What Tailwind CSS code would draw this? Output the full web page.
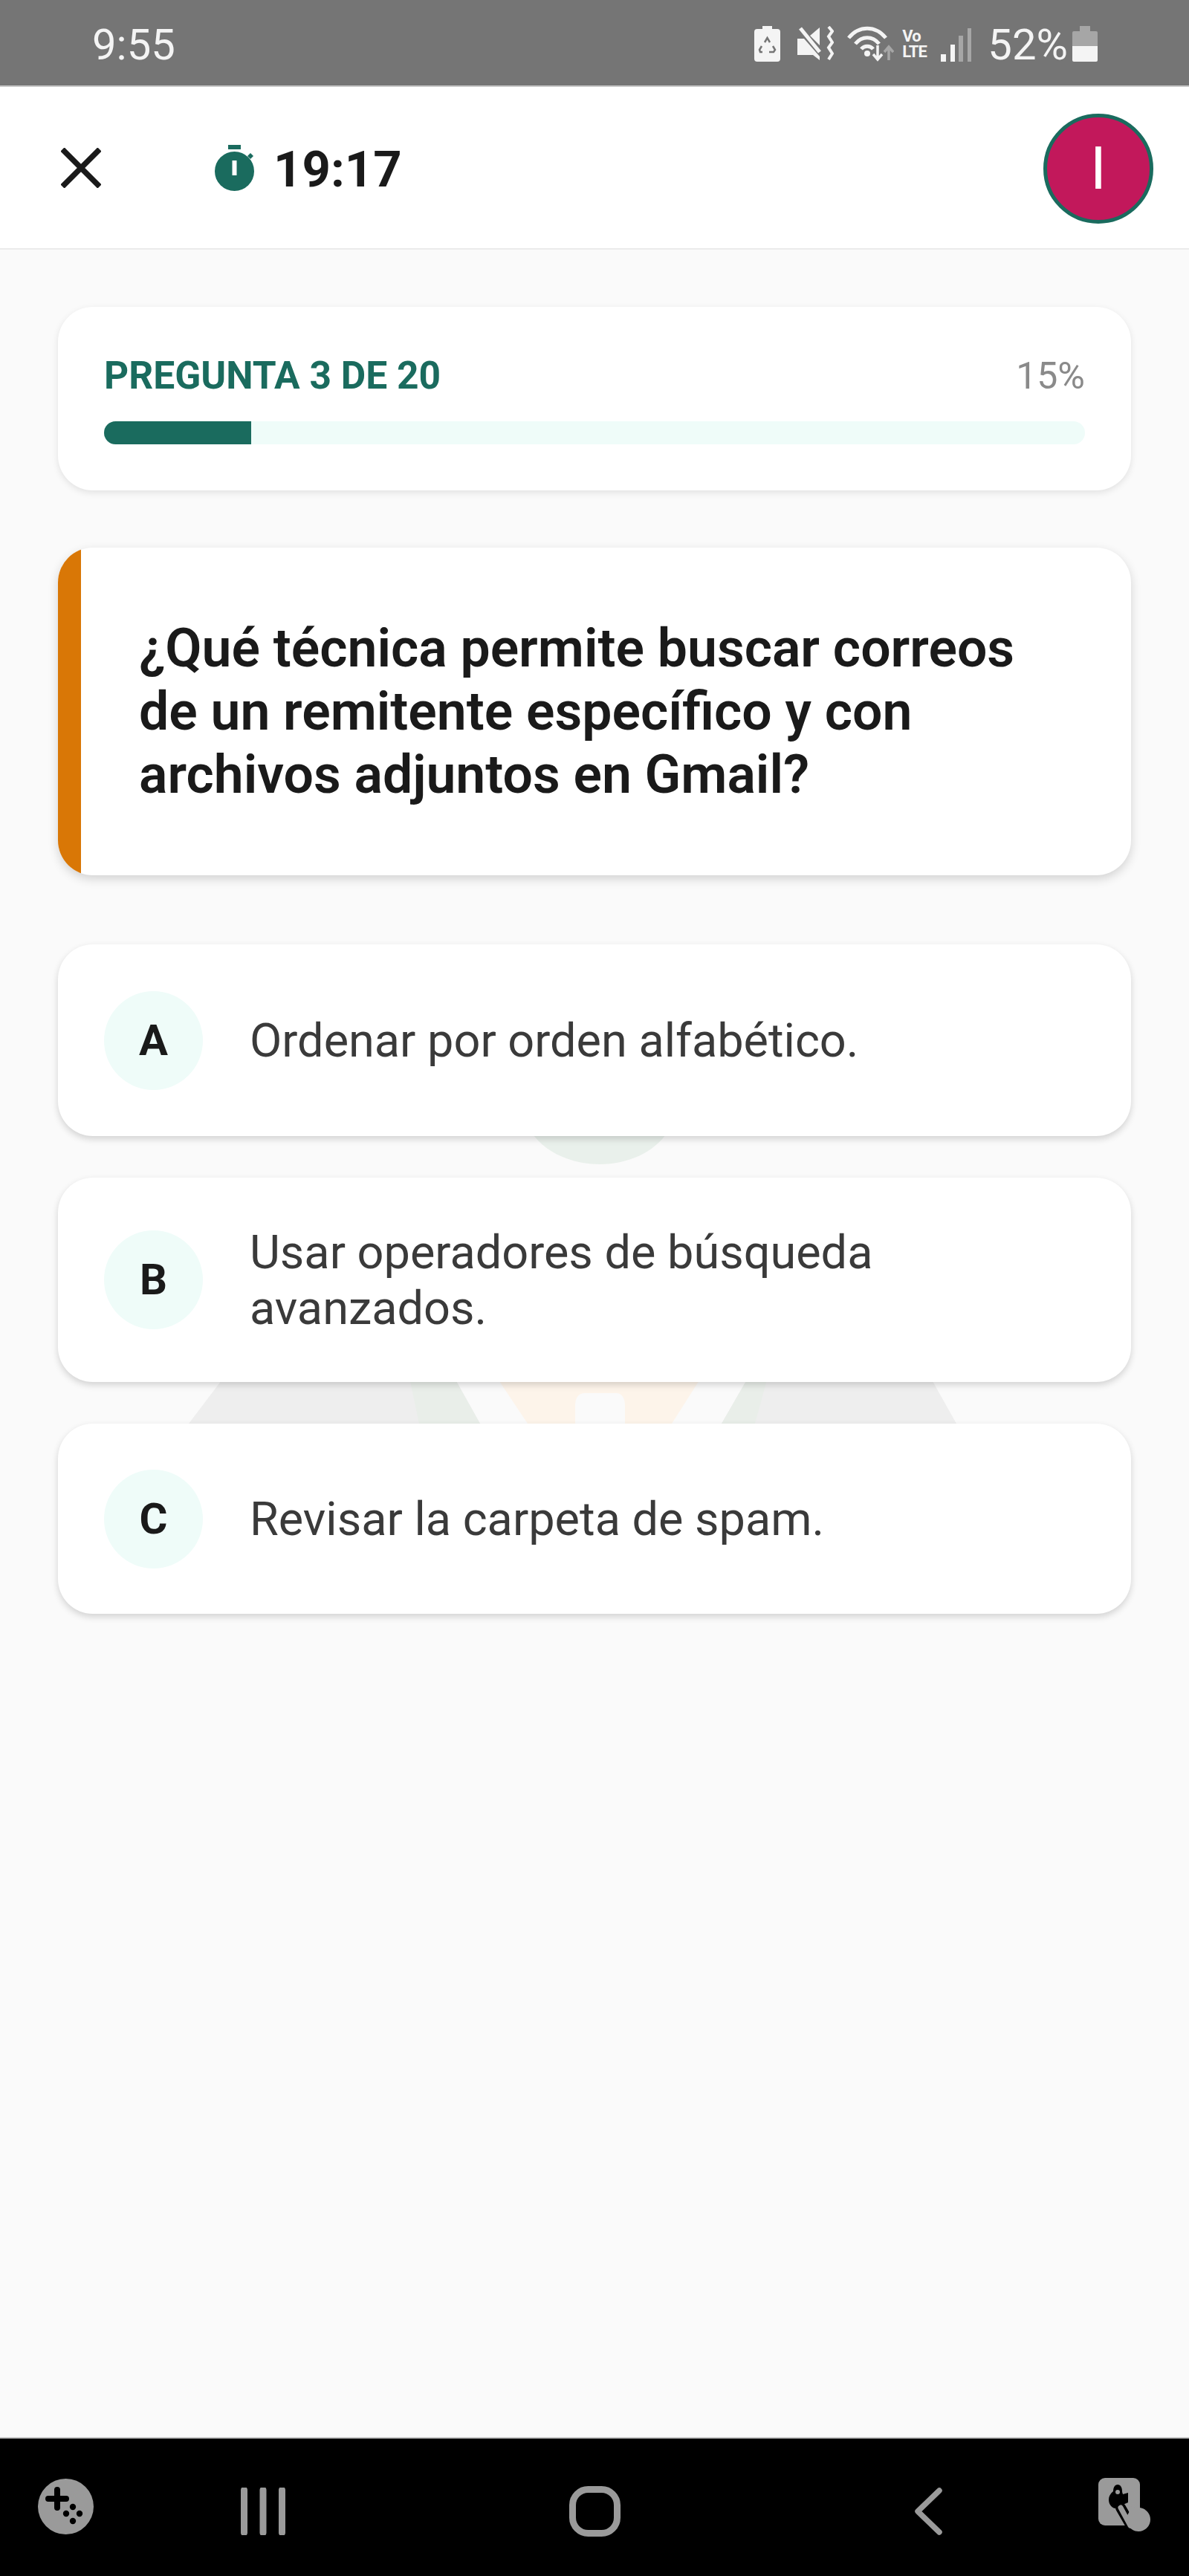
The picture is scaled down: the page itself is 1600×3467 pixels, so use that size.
<!DOCTYPE html>
<html lang="es">
<head>
    <meta charset="UTF-8">
    <meta name="viewport" content="width=device-width, initial-scale=1.0">
    <title>Pregunta 3 de 20</title>
    <script src="https://cdn.jsdelivr.net/npm/@tailwindcss/browser@4"></script>
</head>
<body class="font-[Roboto,sans-serif] bg-black">
    <div class="w-[1600px] h-[3467px] flex flex-col overflow-hidden">

        <!-- Status bar -->
        <div class="h-[117px] shrink-0 bg-[#757575] border-b-2 border-[#c8c8c8] flex items-start relative">
            <span class="ml-[124px] mt-[26px] text-[58px] leading-[68px] text-[#f4f4f4]">9:55</span>
            <div class="ml-auto mr-[123px] mt-[35px] flex items-start">
                <!-- battery saver -->
                <svg class="w-[35px] h-[48px]" viewBox="0 0 35 48">
                    <path d="M11 0h13v4h7a4 4 0 0 1 4 4v36a4 4 0 0 1-4 4H4a4 4 0 0 1-4-4V8a4 4 0 0 1 4-4h7z" fill="#f4f4f4"/>
                    <path d="M14 22l3.500-6 3.500 6M25 27l3 5-2 3h-6M11 35H8l-1-3 3-5" fill="none" stroke="#757575" stroke-width="2.500"/>
                </svg>
                <!-- mute + vibrate -->
                <svg class="ml-[23px] w-[49px] h-[48px]" viewBox="0 0 49 48">
                    <path d="M0 17h9l21 24v5l-9-7H0z" fill="#f4f4f4"/>
                    <path d="M17 13l13-11v24z" fill="#f4f4f4"/>
                    <path d="M4 3l26 32" stroke="#f4f4f4" stroke-width="5"/>
                    <path d="M42 1l5 6-5 7 5 8-5 7 5 8-5 8" fill="none" stroke="#f4f4f4" stroke-width="4"/>
                </svg>
                <!-- wifi -->
                <svg class="ml-[18px] w-[63px] h-[48px]" viewBox="0 0 63 48">
                    <path d="M2 16C16 -1 38 -1 52 16" fill="none" stroke="#f4f4f4" stroke-width="5"/>
                    <path d="M11 24C20 13 34 13 43 24" fill="none" stroke="#f4f4f4" stroke-width="5"/>
                    <path d="M19 31C23 26 31 26 35 31" fill="none" stroke="#f4f4f4" stroke-width="5"/>
                    <circle cx="27" cy="37" r="4" fill="#f4f4f4"/>
                    <path d="M41 26v18M35 38l6 7 6-7" fill="none" stroke="#f4f4f4" stroke-width="3.500"/>
                    <path d="M56 46V30M50 35l6-7 6 7" fill="none" stroke="#a6a6a6" stroke-width="3.500"/>
                </svg>
                <!-- VoLTE -->
                <div class="ml-[11px] mt-[3px] w-[38px] flex flex-col items-start text-[#f4f4f4] font-bold text-[22px] leading-[21px] tracking-[-1px]">
                    <span>Vo</span>
                    <span>LTE</span>
                </div>
                <!-- signal -->
                <svg class="ml-[14px] mt-[3px] w-[42px] h-[45px]" viewBox="0 0 42 45">
                    <rect x="0" y="35" width="7" height="10" fill="#f4f4f4"/>
                    <rect x="13" y="22" width="6" height="23" fill="#f4f4f4"/>
                    <rect x="24" y="10" width="6" height="35" fill="#a6a6a6"/>
                    <rect x="36" y="0" width="5" height="45" fill="#a6a6a6"/>
                </svg>
                <span class="ml-[21px] -mt-[9px] text-[58px] leading-[68px] text-[#f4f4f4]">52%</span>
                <!-- battery -->
                <svg class="ml-[6px] w-[34px] h-[48px]" viewBox="0 0 34 48">
                    <path d="M10 0h14v7h8a2 2 0 0 1 2 2v18H0V9a2 2 0 0 1 2-2h8z" fill="#a6a6a6"/>
                    <path d="M0 27h34v19a2 2 0 0 1-2 2H2a2 2 0 0 1-2-2z" fill="#f4f4f4"/>
                </svg>
            </div>
        </div>

        <!-- Header -->
        <div class="h-[219px] shrink-0 bg-white border-b-2 border-[#ebebeb] flex items-center pl-[82px] pr-[48px] relative z-10">
            <svg class="w-[54px] h-[54px]" viewBox="0 0 54 54">
                <path d="M2 2l50 50M52 2L2 52" stroke="#1a1a1a" stroke-width="7.500"/>
            </svg>
            <svg class="ml-[153px] w-[53px] h-[62px]" viewBox="0 0 53 62">
                <rect x="18" y="0" width="17" height="6" fill="#1a6b5e"/>
                <circle cx="26.500" cy="35.500" r="26.500" fill="#1a6b5e"/>
                <path d="M44 15l4-4 4 4-4 4z" fill="#1a6b5e"/>
                <rect x="23.500" y="21" width="6" height="20" fill="#ffffff"/>
            </svg>
            <span class="ml-[26px] mt-[5px] text-[67px] leading-[76px] font-bold text-[#1a1a1a]">19:17</span>
            <div class="ml-auto mt-[3px] w-[148px] h-[148px] rounded-full bg-[#c2185b] border-[5px] border-[#1a6b5e] flex items-center justify-center">
                <span class="text-[80px] leading-none text-white">I</span>
            </div>
        </div>

        <!-- Quiz -->
        <main class="flex-1 bg-[#fafafa] relative px-[78px] pt-[77px]">
            <!-- watermark behind the options -->
            <svg class="absolute top-0 left-0 w-[1600px] h-[2944px]" viewBox="0 336 1600 2944">
                <path d="M705 1500h203c-8 40-52 67-101 67s-94-27-102-67z" fill="#e9f0eb"/>
                <path d="M304 1850h305l37 66H254z" fill="#eeeeee"/>
                <path d="M550 1850h59l37 66h-82z" fill="#e9eee9"/>
                <path d="M1009 1850h241l37 66H971z" fill="#eeeeee"/>
                <path d="M1009 1850h25l-18 66h-45z" fill="#e9eee9"/>
                <path d="M666 1850h280l-42 66H841v-24c0-10-4-17-12-17h-42c-9 0-13 7-13 17v24h-64z" fill="#fdf4ea"/>
            </svg>

            <div class="relative flex flex-col">
                <!-- Progress -->
                <div class="h-[247px] bg-white rounded-[47px] shadow-[0_3px_10px_rgba(0,0,0,0.10)] px-[62px] pt-[63px]">
                    <div class="flex items-center justify-between h-[60px]">
                        <span class="text-[51.500px] leading-[60px] font-bold text-[#1a6b5e]">PREGUNTA 3 DE 20</span>
                        <span class="text-[50px] leading-[60px] text-[#8a8a8a]">15%</span>
                    </div>
                    <div class="mt-[31px] h-[31px] rounded-full bg-[#effcf9] overflow-hidden">
                        <div class="h-full w-[15%] bg-[#1a6b5e]"></div>
                    </div>
                </div>

                <!-- Question -->
                <div class="mt-[77px] h-[441px] bg-white rounded-[47px] shadow-[0_5px_14px_rgba(0,0,0,0.16)] overflow-hidden flex">
                    <div class="w-[31px] shrink-0 bg-[#d97706]"></div>
                    <p class="pl-[78px] pr-[135px] self-center text-[71.500px] leading-[85px] font-semibold text-[#1a1a1a]">¿Qué técnica permite buscar correos de un remitente específico y con archivos adjuntos en Gmail?</p>
                </div>

                <!-- Options -->
                <div class="mt-[93px] flex flex-col gap-[56px]">
                    <div class="h-[258px] bg-white rounded-[47px] shadow-[0_4px_10px_rgba(0,0,0,0.16)] flex items-center pl-[62px] pr-[100px]">
                        <div class="w-[133px] h-[133px] shrink-0 rounded-full bg-[#effcf9] flex items-center justify-center text-[58px] font-bold text-[#1a1a1a]">A</div>
                        <span class="ml-[63px] text-[63px] leading-[75px] text-[#3a3a3a]">Ordenar por orden alfabético.</span>
                    </div>
                    <div class="h-[275px] bg-white rounded-[47px] shadow-[0_4px_10px_rgba(0,0,0,0.16)] flex items-center pl-[62px] pr-[200px]">
                        <div class="w-[133px] h-[133px] shrink-0 rounded-full bg-[#effcf9] flex items-center justify-center text-[58px] font-bold text-[#1a1a1a]">B</div>
                        <span class="ml-[63px] text-[63px] leading-[75px] text-[#3a3a3a]">Usar operadores de búsqueda avanzados.</span>
                    </div>
                    <div class="h-[256px] bg-white rounded-[47px] shadow-[0_4px_10px_rgba(0,0,0,0.16)] flex items-center pl-[62px] pr-[100px]">
                        <div class="w-[133px] h-[133px] shrink-0 rounded-full bg-[#effcf9] flex items-center justify-center text-[58px] font-bold text-[#1a1a1a]">C</div>
                        <span class="ml-[63px] text-[63px] leading-[75px] text-[#3a3a3a]">Revisar la carpeta de spam.</span>
                    </div>
                </div>
            </div>
        </main>

        <!-- Nav bar -->
        <div class="h-[187px] shrink-0 bg-black border-t-2 border-[#c8c8c8] flex items-start pl-[51px]">
            <!-- game launcher -->
            <svg class="mt-[54px] w-[75px] h-[75px]" viewBox="0 0 75 75">
                <circle cx="37.500" cy="37.500" r="37.500" fill="#9a9a9a"/>
                <path d="M26 15v24M14 27h24" stroke="#000000" stroke-width="8" stroke-linecap="round"/>
                <circle cx="47" cy="38" r="4.200" fill="#000000"/>
                <circle cx="38" cy="47" r="4.200" fill="#000000"/>
                <circle cx="56" cy="47" r="4.200" fill="#000000"/>
                <circle cx="47" cy="57" r="4.200" fill="#000000"/>
            </svg>
            <!-- recents -->
            <svg class="ml-[198px] mt-[66px] w-[60px] h-[64px]" viewBox="0 0 60 64">
                <path d="M4.500 3v58M30 3v58M55.500 3v58" stroke="#9a9a9a" stroke-width="9" stroke-linecap="round"/>
            </svg>
            <!-- home -->
            <svg class="ml-[382px] mt-[64px] w-[69px] h-[68px]" viewBox="0 0 69 68">
                <rect x="4.500" y="4.500" width="60" height="59" rx="21" fill="none" stroke="#9a9a9a" stroke-width="9"/>
            </svg>
            <!-- back -->
            <svg class="ml-[396px] mt-[66px] w-[37px] h-[64px]" viewBox="0 0 37 64">
                <path d="M33 4L4 32l29 28" fill="none" stroke="#9a9a9a" stroke-width="7.500" stroke-linecap="round" stroke-linejoin="round"/>
            </svg>
            <!-- touch lock -->
            <svg class="ml-[210px] mt-[53px] w-[70px] h-[72px]" viewBox="0 0 70 72">
                <rect x="0" y="0" width="56" height="64" rx="9" fill="#9a9a9a"/>
                <path d="M26 9c-4 0-6 4-6 9-4 3-6 7-6 11 0 6 3 10 8 12l18-8V20l-7 2c0-1-1-2-1-4 0-5-2-9-6-9z" fill="#000000"/>
                <circle cx="26" cy="19" r="3" fill="#9a9a9a"/>
                <path d="M30 40l15 26" stroke="#000000" stroke-width="14" stroke-linecap="round"/>
                <path d="M30 40l13 24" stroke="#9a9a9a" stroke-width="7" stroke-linecap="round"/>
                <circle cx="54" cy="56" r="16" fill="#9a9a9a"/>
                <path d="M42 38l20 4 8 14-14 14-16-6z" fill="#9a9a9a"/>
            </svg>
        </div>
    </div>
</body>
</html>
